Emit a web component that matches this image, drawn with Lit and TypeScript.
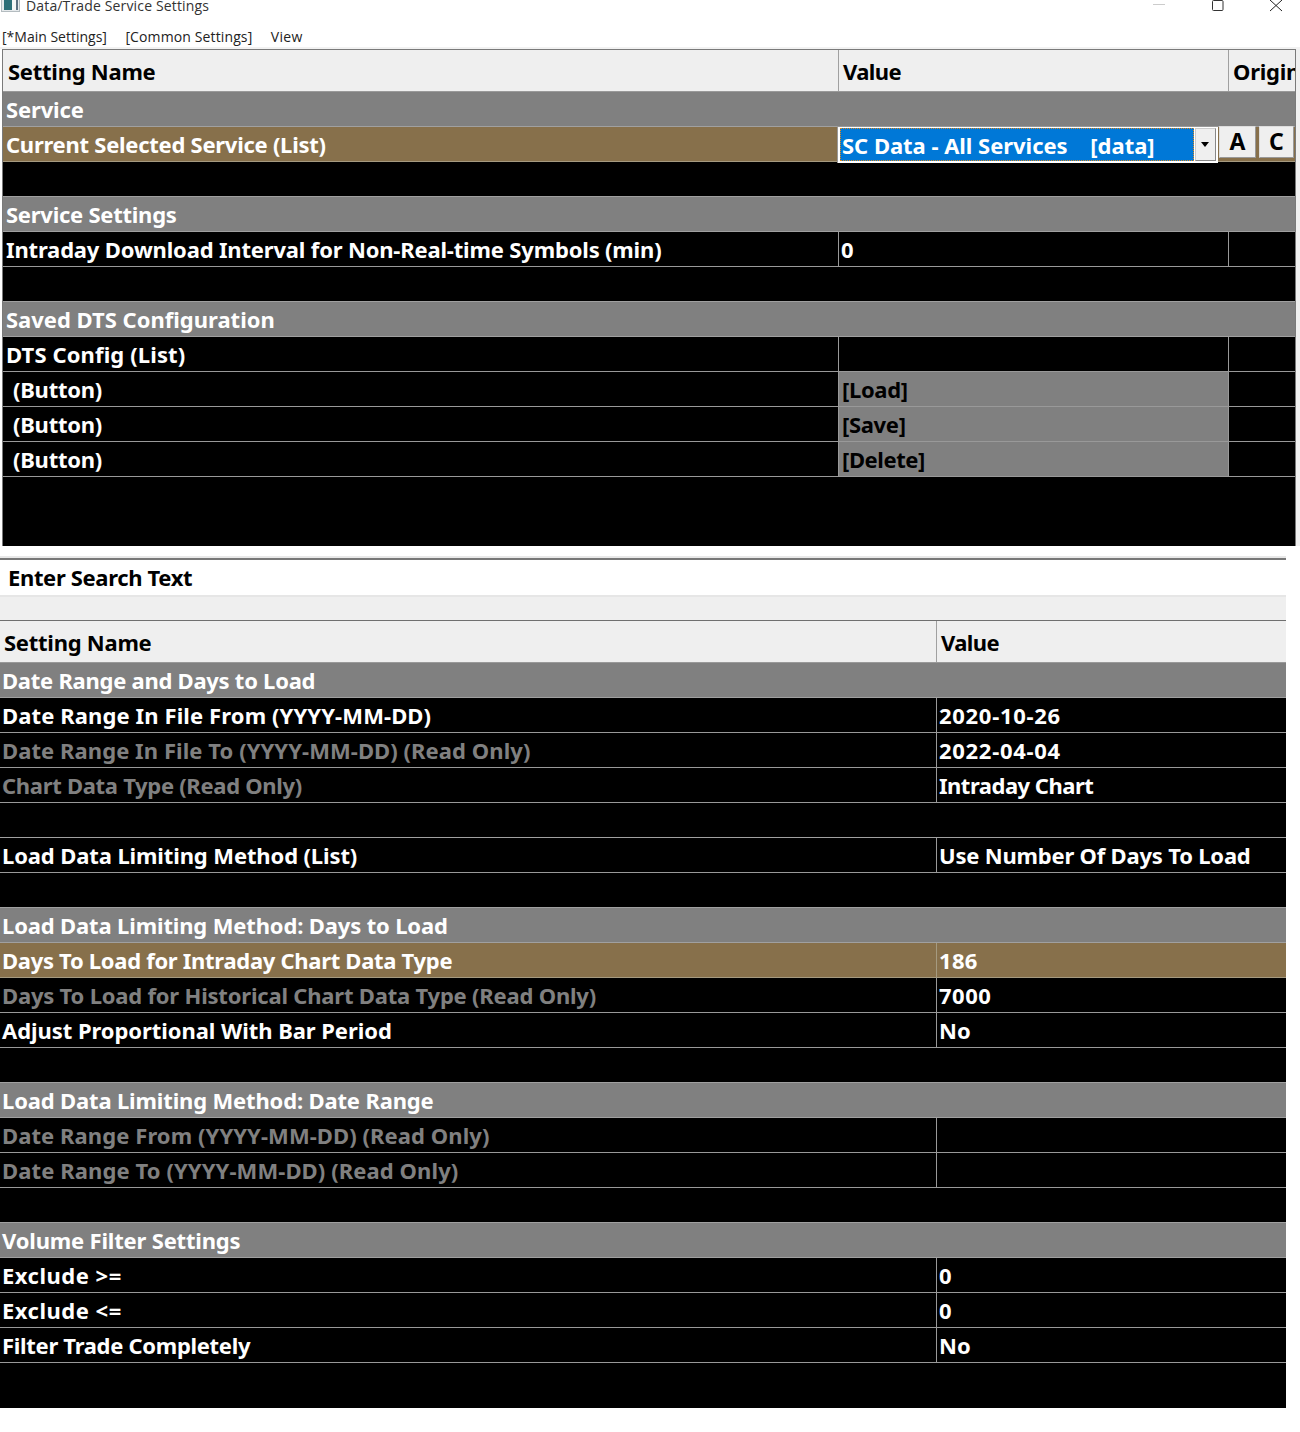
import { LitElement, html, css } from "lit";
import { customElement } from "lit/decorators.js";

// kind, name, value, letter-spacing of name, letter-spacing of value
type Row = [kind: string, name?: string, value?: string, nameLs?: number, valueLs?: number];

const top: Row[] = [
  ["group", "Service", "", -0.15],
  ["sel", "Current Selected Service (List)", "", -0.26],
  ["blank"],
  ["group", "Service Settings", "", -0.25],
  ["row", "Intraday Download Interval for Non-Real-time Symbols (min)", "0", -0.17],
  ["blank"],
  ["group", "Saved DTS Configuration", "", 0],
  ["row", "DTS Config (List)", "", 0.12],
  ["btn", "(Button)", "[Load]", -0.25, -0.33],
  ["btn", "(Button)", "[Save]", -0.25, -0.33],
  ["btn", "(Button)", "[Delete]", -0.25, -0.4],
];

const bottom: Row[] = [
  ["group", "Date Range and Days to Load", "", -0.26],
  ["row", "Date Range In File From (YYYY-MM-DD)", "2020-10-26", 0.11, 0.7],
  ["ro", "Date Range In File To (YYYY-MM-DD) (Read Only)", "2022-04-04", 0.07, 0.7],
  ["ro", "Chart Data Type (Read Only)", "Intraday Chart", -0.3, -0.5],
  ["blank"],
  ["row", "Load Data Limiting Method (List)", "Use Number Of Days To Load", -0.12, -0.2],
  ["blank"],
  ["group", "Load Data Limiting Method: Days to Load", "", -0.15],
  ["hi", "Days To Load for Intraday Chart Data Type", "186", -0.3, 0.3],
  ["ro", "Days To Load for Historical Chart Data Type (Read Only)", "7000", -0.2, 0.5],
  ["row", "Adjust Proportional With Bar Period", "No", -0.06],
  ["blank"],
  ["group", "Load Data Limiting Method: Date Range", "", -0.16],
  ["ro", "Date Range From (YYYY-MM-DD) (Read Only)", "", 0.08],
  ["ro", "Date Range To (YYYY-MM-DD) (Read Only)", "", 0.1],
  ["blank"],
  ["group", "Volume Filter Settings", "", -0.18],
  ["row", "Exclude >=", "0", 0.5],
  ["row", "Exclude <=", "0", 0.5],
  ["row", "Filter Trade Completely", "No", -0.3],
];

const ls = (v?: number) => (v ? `letter-spacing:${v}px` : "");

@customElement("app-root")
export class AppRoot extends LitElement {
  static styles = css`
    :host { display: block; width: 1300px; height: 1432px; background: #fff; overflow: hidden;
      font-family: "Noto Sans", "Open Sans", sans-serif; }
    .title { height: 14px; display: flex; padding-left: 1px; position: relative;
      font: 14px/12px "Open Sans", "Noto Sans", sans-serif; color: #333; letter-spacing: 0.15px; }
    .title .app { width: 19px; height: 12px; margin-right: 6px; flex: none; display: block; }
    .winbtns { margin-left: auto; height: 14px; }
    .winbtns svg { display: block; }
    .menu { height: 35px; box-sizing: border-box; padding: 15px 0 0 2px; display: flex; gap: 18.5px;
      border-bottom: 2px solid #f2f2f2;
      font: 14px/16px "Open Sans", "Noto Sans", sans-serif; color: #222; }
    .menu .m2 { letter-spacing: 0.12px; }
    .menu .m3 { letter-spacing: 0.3px; }

    .top { display: flex; padding-left: 2px; }
    .panel1 { width: 1294px; height: 497px; box-sizing: border-box; background: #000;
      border: 1px solid #7a7a7a; border-bottom: 0; overflow: hidden; flex: none; }
    .edge { flex: 1; background: #f0f0f0; }
    .panel2 { width: 1286px; }
    .hr { width: 1286px; height: 4px; box-sizing: border-box; margin-top: 10px; background: #777; border-top: 2px solid #e8e8e8; }
    .search { height: 37px; box-sizing: border-box; padding: 0 0 2px 8px; display: flex; align-items: center; border-bottom: 2px solid #e6e6e6;
      font-size: 22px; font-weight: 700; color: #000; letter-spacing: -0.35px; }
    .strip { height: 24px; box-sizing: border-box; background: #efefef; border-bottom: 1px solid #6f6f6f; }

    .r { display: flex; height: 35px; box-sizing: border-box; border-bottom: 1px solid #999;
      font-size: 22px; font-weight: 700; line-height: 34px; color: #fff; white-space: nowrap; background: #000; }
    .c { box-sizing: border-box; padding-left: 3px; overflow: hidden; border-right: 1px solid #999; flex: none; }
    .p1 .c1 { width: 836px; }
    .p1 .c2 { width: 390px; padding-left: 2px; }
    .p1 .c3 { flex: 1; border-right: 0; padding-left: 4px; }
    .p2 .c1 { width: 937px; padding-left: 2px; }
    .p2 .c2 { flex: 1; border-right: 0; padding-left: 2px; }

    .r.head { height: 42px; background: #efefef; color: #000; line-height: 43px; letter-spacing: -0.25px; }
    .p1 .head .c1 { padding-left: 5px; }
    .p1 .head .c2 { padding-left: 4px; letter-spacing: -0.6px; }
    .p2 .head .c1 { padding-left: 4px; }
    .p2 .head .c2 { padding-left: 4px; letter-spacing: -0.6px; }
    .head .c { border-right-color: #a0a0a0; }

    .group { background: #808080; border-bottom-color: #a0a0a0; padding-left: 3px; }
    .p2 .group { padding-left: 2px; }
    .blank { border-bottom-color: #a0a0a0; }
    .ro .c1 { color: #808080; }
    .hi { background: #87704b; border-bottom-color: #a59a80; }
    .hi .c { border-right-color: #a59a80; }
    .r.btn .c1 { padding-left: 10px; }
    .r.btn .c2 { background: #808080; color: #000; padding-left: 3px; }

    .sel { position: relative; overflow: visible; background: #87704b; border-bottom-color: #a59a80; }
    .sel .c1 { border-right: 0; }
    .combo { position: absolute; left: 834px; top: -1px; width: 381px; height: 37px; box-sizing: border-box; display: flex;
      background: #fff; border-top: 1px solid #999; border-left: 1px solid #999; padding: 1px 2px 2px 2px; gap: 1px; z-index: 2; }
    .combo .val { flex: 1; background: #0078d7; color: #fff; outline: 1px dotted #e08a20; outline-offset: -1px;
      line-height: 35px; padding-left: 2px; white-space: pre; letter-spacing: -0.03px; }
    .combo .arrow { width: 21px; background: #efefef; border: 1px solid #ccc; border-right-color: #888; border-bottom-color: #888;
      box-sizing: border-box; display: flex; align-items: center; justify-content: center; }
    .combo .arrow i { width: 0; height: 0; border-style: solid; border-color: #000 transparent transparent; border-width: 5px 4.5px 0;
      display: block; margin-right: 1px; }
    .minis { position: absolute; left: 1216px; top: -1px; display: flex; gap: 3px; z-index: 2; }
    .mini { width: 37px; height: 32px; box-sizing: border-box; background: #efefef; border: 1px solid #ddd;
      border-right-color: #999; border-bottom-color: #999; color: #000; text-align: center; line-height: 29px; font-size: 23px; }
    .mini + .mini { width: 35px; }
  `;

  row(r: Row) {
    const [k, n, v, a, b] = r;
    if (k === "blank") return html`<div class="r blank"></div>`;
    if (k === "group") return html`<div class="r group" style=${ls(a)}>${n}</div>`;
    if (k === "sel")
      return html`<div class="r sel"><div class="c c1" style=${ls(a)}>${n}</div>
        <div class="combo"><div class="val">SC Data - All Services    [data]</div><div class="arrow"><i></i></div></div>
        <div class="minis"><div class="mini">A</div><div class="mini">C</div></div></div>`;
    return html`<div class="r ${k}"><div class="c c1" style=${ls(a)}>${n}</div><div class="c c2" style=${ls(b)}>${v}</div><div class="c c3"></div></div>`;
  }
  row2(r: Row) {
    const [k, n, v, a, b] = r;
    if (k === "blank") return html`<div class="r blank"></div>`;
    if (k === "group") return html`<div class="r group" style=${ls(a)}>${n}</div>`;
    return html`<div class="r ${k}"><div class="c c1" style=${ls(a)}>${n}</div><div class="c c2" style=${ls(b)}>${v}</div></div>`;
  }

  render() {
    return html`
      <div class="title">
        <svg class="app" viewBox="0 0 19 12">
          <rect x="0.5" y="-1" width="18" height="12.5" fill="#e6eaec" stroke="#b4bcc0"/>
          <rect x="3" y="0" width="8" height="10" fill="#2c6f78"/>
          <rect x="11" y="0" width="4" height="10" fill="#f4f6f6"/>
          <rect x="15" y="0" width="2" height="10" fill="#5b6f80"/>
        </svg>
        <span>Data/Trade Service Settings</span>
        <div class="winbtns">
          <svg width="147" height="14" viewBox="0 0 147 14" fill="none" stroke="#333">
            <line x1="0" y1="4.5" x2="12" y2="4.5" stroke="#ccc"/>
            <rect x="59.5" y="0.5" width="10.5" height="10" rx="1"/>
            <path d="M117 0 L129 11 M129 0 L117 11" stroke="#222"/>
          </svg>
        </div>
      </div>
      <div class="menu"><span>[*Main Settings]</span><span class="m2">[Common Settings]</span><span class="m3">View</span></div>
      <div class="top">
        <div class="panel1 p1">
          <div class="r head"><div class="c c1">Setting Name</div><div class="c c2">Value</div><div class="c c3">Origin</div></div>
          ${top.map((r) => this.row(r))}
        </div>
        <div class="edge"></div>
      </div>
      <div class="hr"></div>
      <div class="panel2 p2">
        <div class="search">Enter Search Text</div>
        <div class="strip"></div>
        <div class="r head"><div class="c c1">Setting Name</div><div class="c c2">Value</div></div>
        ${bottom.map((r) => this.row2(r))}
        <div class="r tail" style="height:45px;border:0"></div>
      </div>
    `;
  }
}
